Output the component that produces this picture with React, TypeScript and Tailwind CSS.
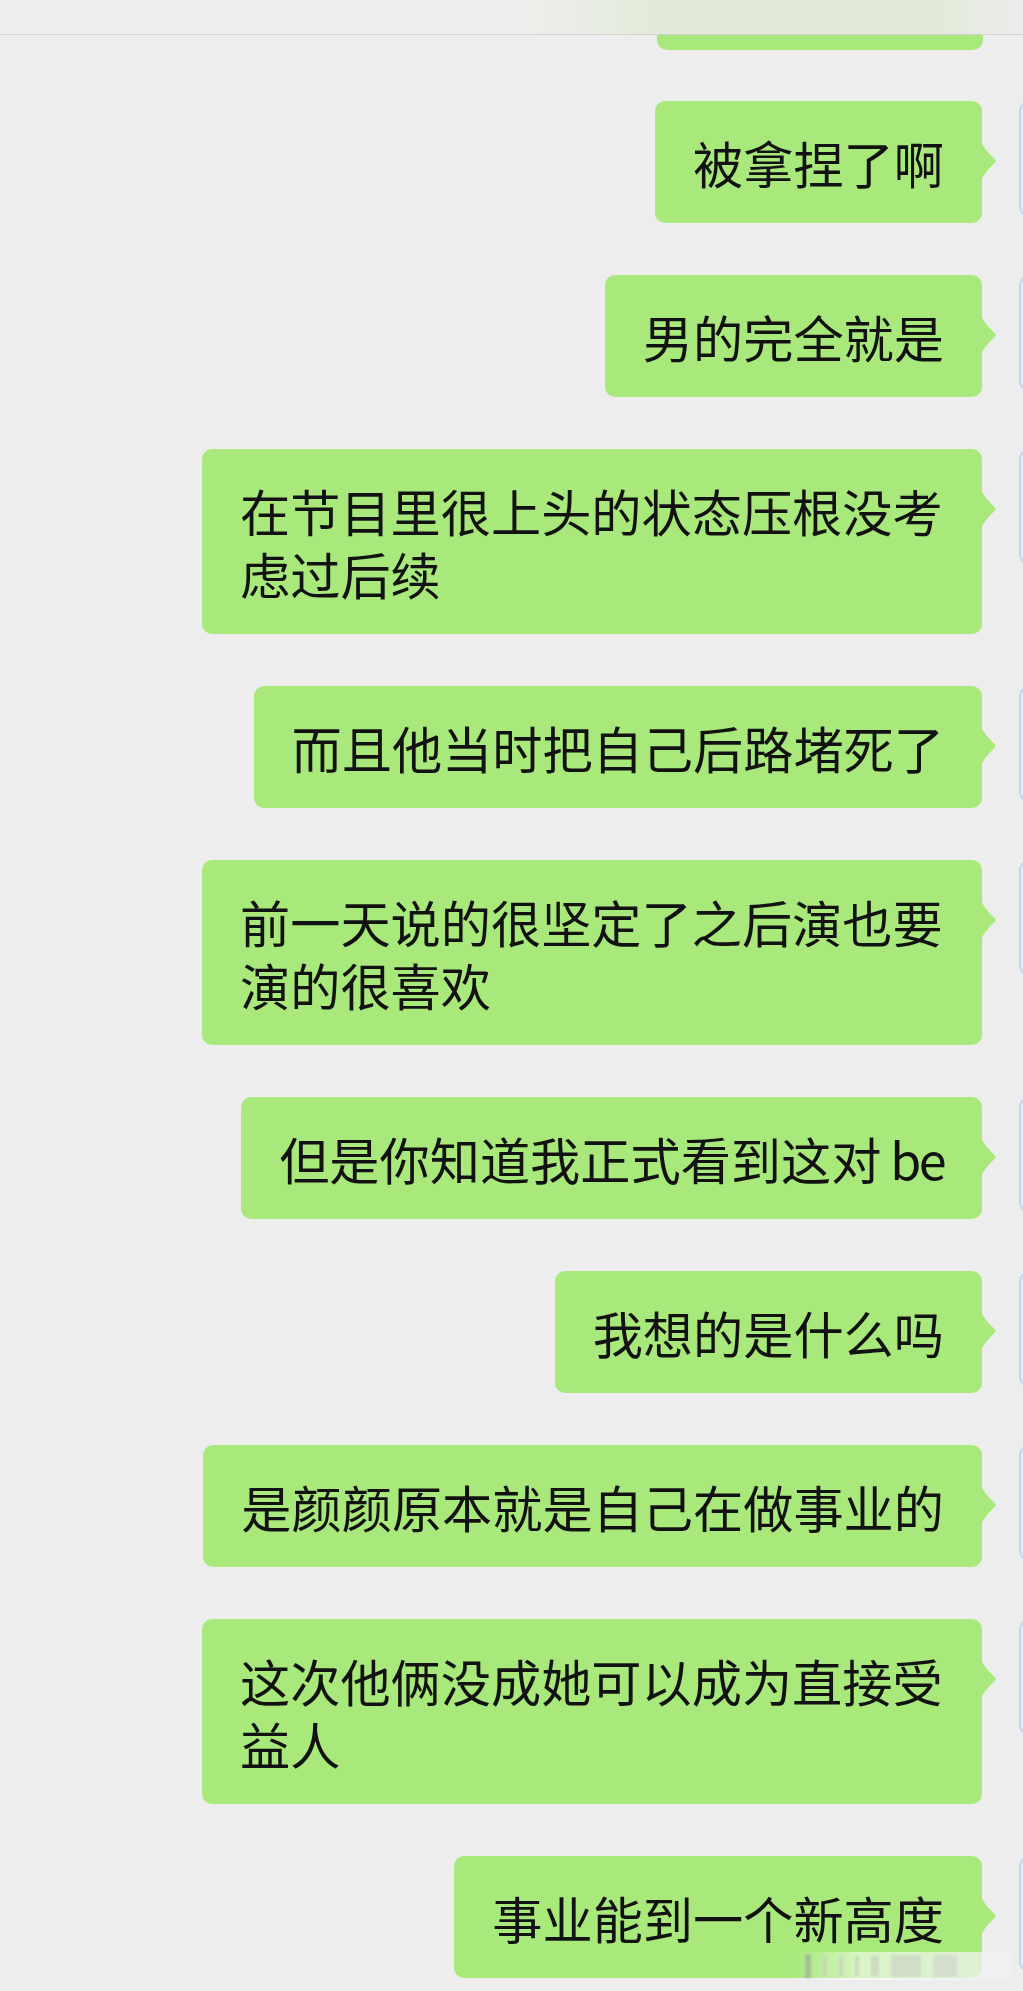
import React from "react";

const messages: React.ReactNode[] = [
  "被拿捏了啊",
  "男的完全就是",
  "在节目里很上头的状态压根没考虑过后续",
  "而且他当时把自己后路堵死了",
  "前一天说的很坚定了之后演也要演的很喜欢",
  <>
    但是你知道我正式看到这对<span className="tracking-[-2.5px]"> be</span>
  </>,
  "我想的是什么吗",
  "是颜颜原本就是自己在做事业的",
  "这次他俩没成她可以成为直接受益人",
  "事业能到一个新高度",
];

function Tail() {
  return (
    <svg
      className="absolute right-[-15px] top-[41px]"
      width="16"
      height="38"
      viewBox="0 0 16 38"
    >
      <path
        d="M0 0 C3 6 8 12 13.5 17 Q15.5 19 13.5 21 C8 26 3 32 0 38 Z"
        fill="#a9e97c"
      />
    </svg>
  );
}

function Bubble({ text }: { text: React.ReactNode }) {
  return (
    <div className="flex justify-end items-start mr-[-112px]">
      <div className="relative max-w-[780px] rounded-[10px] bg-[#a9e97c] px-[38px] py-[29.5px] text-[50.2px] leading-[63px] text-[#121212] [font-family:'Noto_Sans_CJK_SC','Noto_Sans',sans-serif]">
        {text}
        <Tail />
      </div>
      <div className="ml-[37px] w-[116px] h-[116px] shrink-0 rounded-[10px] border-2 border-[#c6d6ee] bg-[#e6ecf4]" />
    </div>
  );
}

export default function App() {
  return (
    <div className="relative w-[1023px] h-[1991px] overflow-hidden bg-[#ededed]">
      <div className="h-[35px] border-b border-[#d2d2d2] bg-[linear-gradient(90deg,#efefef_0%,#efefef_50%,#e3ead9_64%,#e3ead9_92%,#ececec_100%)]" />
      <div className="flex justify-end pr-[40px]">
        <div className="h-[15px] w-[326px] rounded-b-[10px] bg-[#a9e97c]" />
      </div>
      <div className="flex flex-col gap-[52px] pt-[51px]">
        {messages.map((m, i) => (
          <Bubble key={i} text={m} />
        ))}
      </div>
      <div className="absolute left-[795px] top-[1952px] flex h-[28px] w-[215px] items-center gap-[12px] bg-[linear-gradient(90deg,rgba(255,255,255,0)_0%,rgba(255,255,255,0.55)_30%,rgba(240,240,240,0.8)_100%)] px-[10px]">
        <span className="h-[24px] w-[6px] bg-[#9aa59a] opacity-60 blur-[1px]" />
        <span className="h-[20px] w-[4px] bg-[#c4cbc0] opacity-60 blur-[1px]" />
        <span className="h-[20px] w-[4px] bg-[#c4cbc0] opacity-60 blur-[1px]" />
        <span className="h-[20px] w-[4px] bg-[#c4cbc0] opacity-60 blur-[1px]" />
        <span className="h-[20px] w-[8px] bg-[#c4cbc0] opacity-60 blur-[1px]" />
        <span className="h-[22px] w-[30px] bg-[#c9cfc6] opacity-60 blur-[1px]" />
        <span className="h-[22px] w-[24px] bg-[#cfd3cc] opacity-60 blur-[1px]" />
      </div>
    </div>
  );
}
